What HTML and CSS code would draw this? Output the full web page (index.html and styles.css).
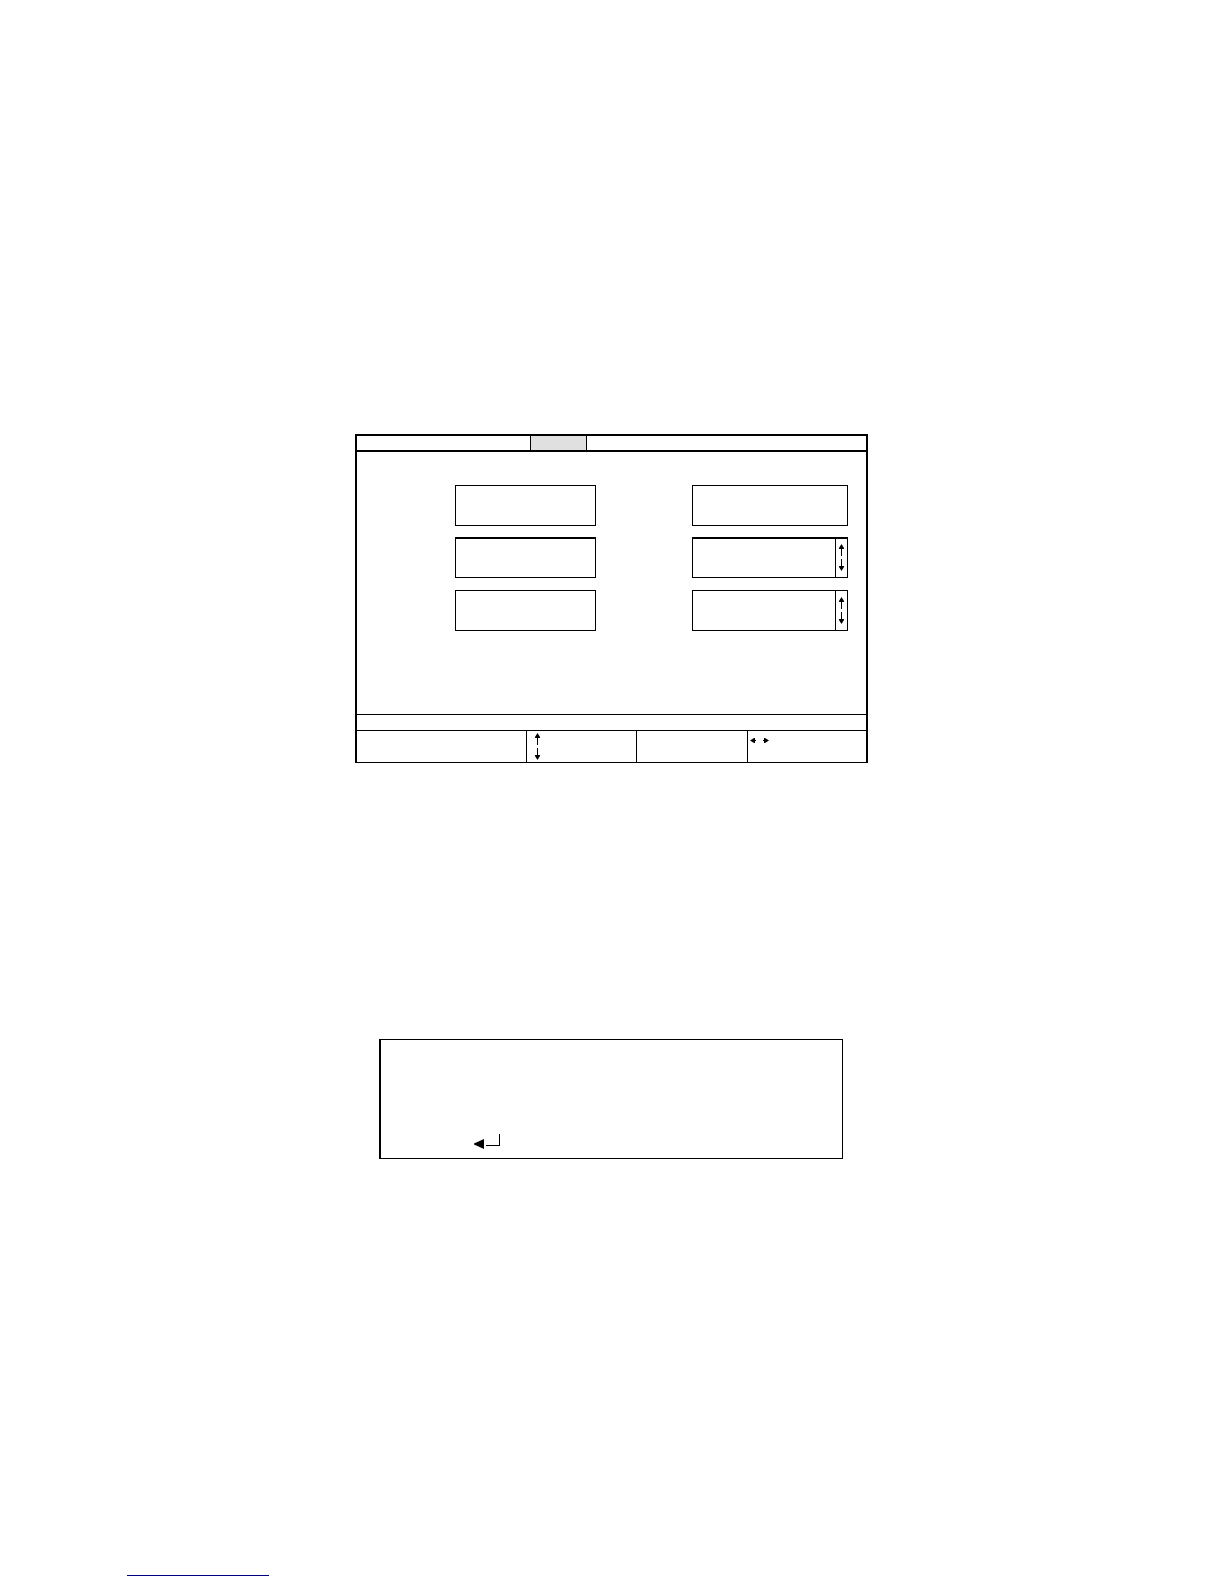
FILE: index.html
```html
<!DOCTYPE html>
<html lang="en">
<head>
<meta charset="utf-8">
<meta name="viewport" content="width=device-width, initial-scale=1">
<title>Setup panel</title>
<link rel="stylesheet" href="styles.css">
</head>
<body>
<svg class="defs" aria-hidden="true">
  <symbol id="arrow" viewBox="0 0 5 12"><path d="M2 3h1v9H2z"/><path d="M2.500 0L5 4v1H0V4z"/></symbol>
  <symbol id="short" viewBox="0 0 6 5"><path d="M0 2.500L4 0h1v2h1v1H5v2H4z"/></symbol>
</svg>
<main class="page">
  <section class="panel" aria-label="Setup">
    <nav class="tabs" aria-label="Menu">
      <button class="tab" type="button" aria-label="Selected menu"></button>
    </nav>
    <form class="fields">
      <input class="field" type="text" aria-label="Left value 1">
      <input class="field" type="text" aria-label="Right value 1">
      <input class="field heavy" type="text" aria-label="Left value 2">
      <div class="field spin heavy">
        <input class="value" type="text" aria-label="Right value 2">
        <button class="stepper" type="button" aria-label="Change right value 2">
          <svg class="arrow"><use href="#arrow"/></svg>
          <svg class="arrow down"><use href="#arrow"/></svg>
        </button>
      </div>
      <input class="field" type="text" aria-label="Left value 3">
      <div class="field spin">
        <input class="value" type="text" aria-label="Right value 3">
        <button class="stepper" type="button" aria-label="Change right value 3">
          <svg class="arrow"><use href="#arrow"/></svg>
          <svg class="arrow down"><use href="#arrow"/></svg>
        </button>
      </div>
    </form>
    <div class="status"></div>
    <div class="keys">
      <div class="key"></div>
      <div class="key vertical">
        <svg class="arrow"><use href="#arrow"/></svg>
        <svg class="arrow down"><use href="#arrow"/></svg>
      </div>
      <div class="key"></div>
      <div class="key horizontal">
        <svg class="short"><use href="#short"/></svg>
        <svg class="short right"><use href="#short"/></svg>
      </div>
    </div>
  </section>
  <section class="message" aria-label="Message">
    <svg class="enter" viewBox="0 0 26 15"><path d="M0 9.500L10 5v10L0 10.500zM12 11h13V0h1v12H12z"/></svg>
  </section>
</main>
<footer class="footer"><a class="link" href="#" aria-label="Home"></a></footer>
</body>
</html>
```
FILE: styles.css
```css
* { box-sizing: border-box; }

body {
  margin: 0;
  background: #fff;
  color: #000;
  font-family: "Liberation Sans", sans-serif;
}

svg {
  display: block;
  flex: none;
  fill: #000;
}

.defs {
  position: absolute;
  width: 0;
  height: 0;
}

.page {
  display: flex;
  flex-direction: column;
  gap: 276px;
  max-width: 514px;
  margin: 0 auto;
  padding: 434px 1px 0 0;
}

.panel {
  border: 2px solid #000;
  border-bottom-width: 1px;
}

.tabs {
  display: grid;
  grid-template-columns: 173fr 57fr 279fr;
  height: 16px;
  border-bottom: 2px solid #000;
}

.tab {
  grid-column: 2;
  padding: 0;
  border: solid #000;
  border-width: 0 1px;
  background: #e0e0e0;
}

.fields {
  display: grid;
  grid-template-columns: 141fr 156fr;
  grid-template-rows: 52px 53px 41px;
  column-gap: 96px;
  align-items: start;
  padding: 33px 18px 83px 98px;
}

.field {
  width: 100%;
  min-width: 0;
  height: 41px;
  padding: 0 4px;
  border: 1px solid #000;
  background: #fff;
}

.heavy { border-top-width: 2px; }

.spin {
  display: flex;
  padding: 0;
}

.value {
  flex: 1;
  min-width: 0;
  padding: 0 4px;
  border: 0;
  background: none;
}

.stepper {
  display: flex;
  flex-direction: column;
  align-items: center;
  justify-content: flex-start;
  gap: 3px;
  width: 12px;
  padding: 6px 0 0;
  border: 0;
  border-left: 1px solid #000;
  background: none;
}

.heavy .stepper { padding-top: 5px; }

.arrow {
  width: 5px;
  height: 12px;
}

.down { transform: rotate(180deg); }

.status {
  height: 16px;
  border-top: 1px solid #000;
}

.keys {
  display: grid;
  grid-template-columns: 169fr 110fr 111fr 119fr;
  height: 32px;
  border-top: 1px solid #000;
}

.key + .key { border-left: 1px solid #000; }

.vertical {
  display: flex;
  flex-direction: column;
  gap: 3px;
  padding: 2px 8px;
}

.horizontal {
  display: flex;
  gap: 7px;
  padding: 7px 2px;
}

.short {
  width: 6px;
  height: 5px;
}

.right { transform: rotate(180deg); }

.message {
  height: 120px;
  margin: 0 25px 0 24px;
  padding: 94px 93px 0;
  border: 1px solid #000;
  border-left-width: 2px;
}

.enter {
  width: 26px;
  height: 15px;
}

.footer { padding: 416px 127px 8px; }

.link {
  display: block;
  max-width: 142px;
  border-bottom: 1px solid #000080;
}
```
